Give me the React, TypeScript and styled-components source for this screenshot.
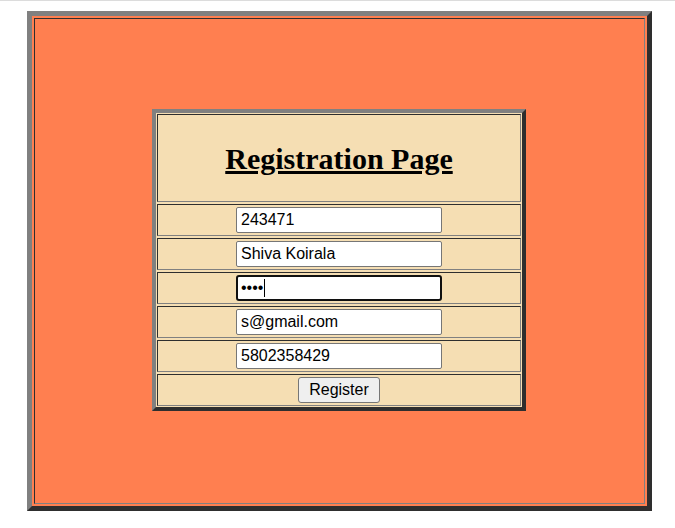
import styled, { createGlobalStyle } from "styled-components";

const GlobalStyle = createGlobalStyle`
  body {
    margin: 0;
    background: #ffffff;
    font-family: "Liberation Serif", "Times New Roman", serif;
  }
`;

const TopRule = styled.div`
  height: 1px;
  background: #dcdcdc;
`;

const Frame = styled.div`
  box-sizing: border-box;
  width: 625px;
  height: 500px;
  margin: 10px 0 0 27px;
  padding: 2px;
  background: #ff7f50;
  border: 5px solid;
  border-color: #808080 #2e2e2e #2e2e2e #808080;
`;

const FrameCell = styled.div`
  box-sizing: border-box;
  height: 100%;
  display: flex;
  align-items: center;
  justify-content: center;
  border: 1px solid;
  border-color: #2e2e2e #808080 #808080 #2e2e2e;
`;

const Card = styled.form`
  box-sizing: border-box;
  width: 374px;
  height: 302px;
  margin: 0 1px 2px 0;
  padding: 1px;
  display: flex;
  flex-direction: column;
  gap: 2px;
  background: #f5deb3;
  border: 4px solid;
  border-color: #808080 #2e2e2e #2e2e2e #808080;
`;

const Row = styled.div<{ $tall?: boolean }>`
  box-sizing: border-box;
  height: ${(p) => (p.$tall ? "88px" : "32px")};
  display: flex;
  align-items: center;
  justify-content: center;
  border: 1px solid;
  border-color: #2e2e2e #808080 #808080 #2e2e2e;
`;

const Title = styled.h1`
  margin: 0;
  padding-top: 2px;
  font-family: "Liberation Serif", "Times New Roman", serif;
  font-size: 30px;
  font-weight: bold;
  text-decoration: underline;
  color: #000;
`;

const Field = styled.input`
  box-sizing: border-box;
  width: 206px;
  height: 26px;
  padding: 1px 4px;
  font-family: "Liberation Sans", Arial, sans-serif;
  font-size: 16px;
  color: #000;
  background: #fff;
  border: 1px solid #767676;
  border-radius: 2px;
  outline: none;
`;

const FocusedField = styled.div`
  box-sizing: border-box;
  width: 206px;
  height: 26px;
  padding: 0 3px;
  display: flex;
  align-items: center;
  font-family: "Liberation Sans", Arial, sans-serif;
  font-size: 16px;
  color: #000;
  background: #fff;
  border: 2px solid #101010;
  border-radius: 3px;
`;

const Caret = styled.span`
  display: inline-block;
  width: 1px;
  height: 18px;
  margin-left: 1px;
  background: #000;
`;

const SubmitButton = styled.button`
  box-sizing: border-box;
  height: 26px;
  padding: 0 10px;
  font-family: "Liberation Sans", Arial, sans-serif;
  font-size: 16px;
  color: #000;
  background: #efefef;
  border: 1px solid #767676;
  border-radius: 3px;
`;

const fields = [
  { name: "id", type: "text", value: "243471" },
  { name: "name", type: "text", value: "Shiva Koirala" },
];

const moreFields = [
  { name: "email", type: "text", value: "s@gmail.com" },
  { name: "phone", type: "text", value: "5802358429" },
];

export default function App() {
  return (
    <>
      <GlobalStyle />
      <TopRule />
      <Frame>
        <FrameCell>
          <Card onSubmit={(e) => e.preventDefault()}>
            <Row $tall>
              <Title>Registration Page</Title>
            </Row>
            {fields.map((f) => (
              <Row key={f.name}>
                <Field name={f.name} type={f.type} defaultValue={f.value} />
              </Row>
            ))}
            <Row>
              <FocusedField>
                ••••
                <Caret />
              </FocusedField>
            </Row>
            {moreFields.map((f) => (
              <Row key={f.name}>
                <Field name={f.name} type={f.type} defaultValue={f.value} />
              </Row>
            ))}
            <Row>
              <SubmitButton type="submit">Register</SubmitButton>
            </Row>
          </Card>
        </FrameCell>
      </Frame>
    </>
  );
}
